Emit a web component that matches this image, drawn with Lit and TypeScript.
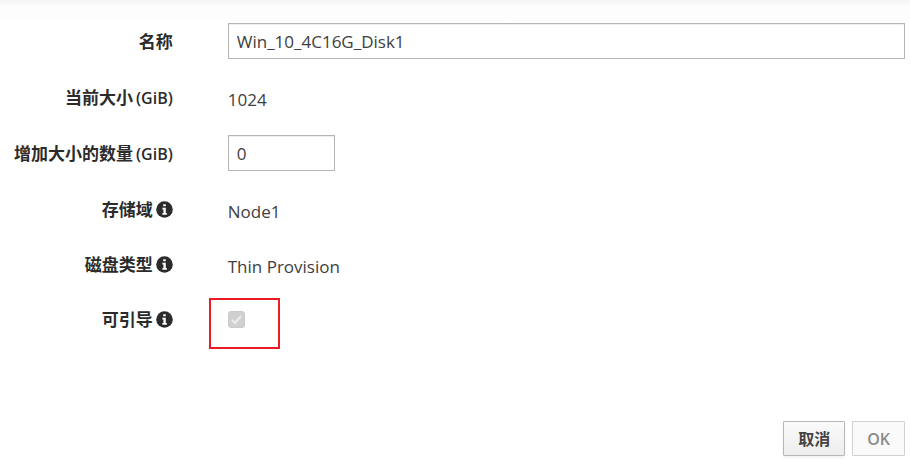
import { LitElement, html, css, svg } from "lit";
import { customElement, property, state } from "lit/decorators.js";

@customElement("info-icon")
class InfoIcon extends LitElement {
  static styles = css`
    :host {
      display: inline-flex;
    }
    .icon {
      display: block;
      width: 17px;
      height: 17px;
    }
  `;

  render() {
    return html`<svg class="icon" viewBox="0 0 16 16" aria-hidden="true">
      ${svg`<circle cx="8" cy="8" r="7.800" fill="#2b2b2b"></circle>
      <path fill="#fff" d="M6.800 3h2.400v2H6.800zM6 6.400h3.200v5h1V13H6v-1.600h1V8H6z"></path>`}
    </svg>`;
  }
}

@customElement("form-row")
class FormRow extends LitElement {
  @property() label = "";
  @property() unit = "";
  @property({ type: Boolean }) info = false;

  static styles = css`
    :host {
      display: grid;
      grid-template-columns: 19% minmax(0, 1fr);
      column-gap: 55px;
      align-items: center;
      min-height: 36px;
    }
    :host([info]) {
      min-height: 35px;
    }
    .label {
      display: flex;
      justify-content: flex-end;
      align-items: center;
      gap: 3px;
      padding-top: 2px;
      font-weight: 700;
      color: #2b2b2b;
      white-space: nowrap;
    }
    .unit {
      font-size: 16px;
      font-weight: 600;
    }
    .value {
      display: flex;
      align-items: center;
    }
  `;

  render() {
    return html`
      <div class="label">
        <span>${this.label}</span>
        ${this.unit ? html`<span class="unit">${this.unit}</span>` : ""}
        ${this.info ? html`<info-icon></info-icon>` : ""}
      </div>
      <div class="value"><slot></slot></div>
    `;
  }
}

@customElement("app-root")
class AppRoot extends LitElement {
  @state() private name = "Win_10_4C16G_Disk1";
  @state() private extend = "0";

  static styles = css`
    :host {
      display: block;
      box-sizing: border-box;
      padding: 0 5px 8px 1px;
      background: linear-gradient(#f5f5f5, #fcfcfc 6px, #fefefe 22px, #fff 24px) no-repeat;
      font: 17px/24px "Open Sans", "Noto Sans CJK SC", sans-serif;
      color: #404040;
    }
    .form {
      display: flex;
      flex-direction: column;
      gap: 20px;
      padding-top: 23px;
    }
    .text {
      box-sizing: border-box;
      height: 36px;
      margin: 0;
      padding: 0 8px;
      border: 1px solid #b5b5b5;
      border-radius: 0;
      background: #fff;
      box-shadow: inset 0 1px 1px rgba(0, 0, 0, 0.07);
      font: inherit;
      color: inherit;
      outline: 0;
    }
    .wide {
      width: 100%;
    }
    .short {
      width: 107px;
    }
    .static {
      padding-top: 6px;
    }
    .marked {
      position: relative;
      display: flex;
      margin-top: 2px;
    }
    .check {
      appearance: none;
      width: 17px;
      height: 17px;
      margin: 0;
      border: 1px solid #cacaca;
      border-radius: 3px;
      background: #d0d0d0;
    }
    .tick {
      position: absolute;
      inset: 0;
      width: 17px;
      height: 17px;
      pointer-events: none;
    }
    .marker {
      position: absolute;
      left: -19px;
      top: -13px;
      box-sizing: border-box;
      width: 71px;
      height: 51px;
      border: 2px solid #ea1c24;
      pointer-events: none;
    }
    .footer {
      display: flex;
      justify-content: flex-end;
      gap: 7px;
      margin-top: 85px;
    }
    .button {
      box-sizing: border-box;
      height: 35px;
      margin: 0;
      padding: 0 14px;
      border: 1px solid #b7b7b7;
      border-radius: 1px;
      background: linear-gradient(#fafafa, #ededed);
      box-shadow: 0 2px 3px rgba(0, 0, 0, 0.05);
      font: inherit;
      font-size: 16px;
      font-weight: 700;
      color: #444;
    }
    .button:disabled {
      border-color: #d1d1d1;
      background: #fafafa;
      box-shadow: none;
      font-weight: 600;
      color: #8b8b8b;
    }
  `;

  render() {
    return html`
      <div class="form">
        <form-row label="名称">
          <input
            class="text wide"
            type="text"
            aria-label="名称"
            .value=${this.name}
            @input=${(e: Event) => (this.name = (e.target as HTMLInputElement).value)}
          />
        </form-row>
        <form-row label="当前大小" unit="(GiB)">
          <span class="static">1024</span>
        </form-row>
        <form-row label="增加大小的数量" unit="(GiB)">
          <input
            class="text short"
            type="text"
            inputmode="numeric"
            aria-label="增加大小的数量 (GiB)"
            .value=${this.extend}
            @input=${(e: Event) => (this.extend = (e.target as HTMLInputElement).value)}
          />
        </form-row>
        <form-row label="存储域" info>
          <span class="static">Node1</span>
        </form-row>
        <form-row label="磁盘类型" info>
          <span class="static">Thin Provision</span>
        </form-row>
        <form-row label="可引导" info>
          <span class="marked">
            <input class="check" type="checkbox" aria-label="可引导" checked disabled />
            <svg class="tick" viewBox="0 0 17 17" aria-hidden="true">
              <path d="M4 9l3 3 6-7" fill="none" stroke="#ececec" stroke-width="2"></path>
            </svg>
            <span class="marker"></span>
          </span>
        </form-row>
      </div>
      <div class="footer">
        <button class="button" type="button">取消</button>
        <button class="button" type="button" disabled>OK</button>
      </div>
    `;
  }
}
